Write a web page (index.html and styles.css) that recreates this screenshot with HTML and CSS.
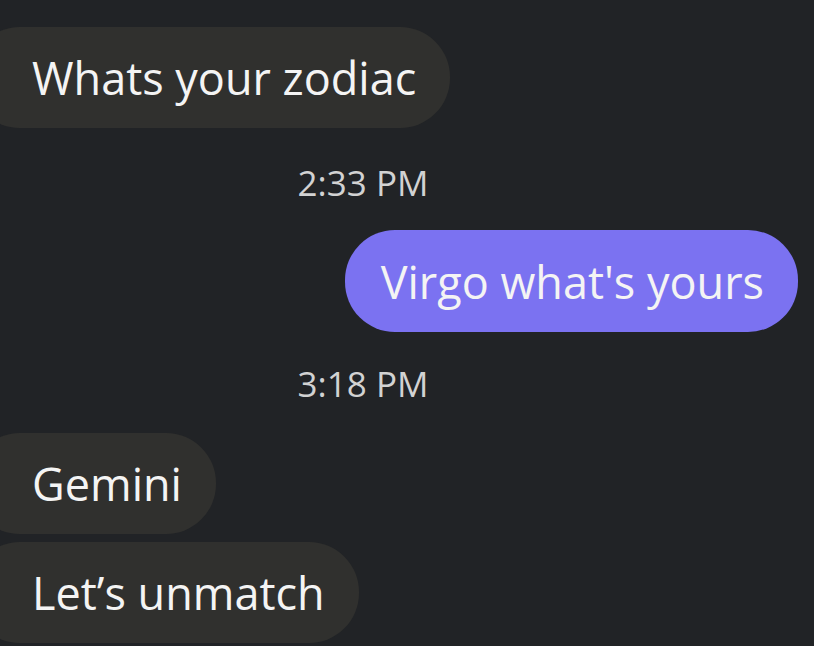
FILE: index.html
```html
<!DOCTYPE html>
<html>
<head>
<meta charset="utf-8">
<link rel="stylesheet" href="styles.css">
</head>
<body>
<div class="chat">
  <div class="row left first"><div class="bubble in">Whats your zodiac</div></div>
  <div class="time">2:33 PM</div>
  <div class="row right"><div class="bubble out">Virgo what's yours</div></div>
  <div class="time t2">3:18 PM</div>
  <div class="row left g"><div class="bubble in">Gemini</div></div>
  <div class="row left u"><div class="bubble in">Let’s unmatch</div></div>
</div>
</body>
</html>
```
FILE: styles.css
```css
html, body {
  margin: 0;
  padding: 0;
  background: #212326;
  height: 100%;
  overflow: hidden;
}
.chat {
  display: flex;
  flex-direction: column;
  font-family: "Open Sans", "Noto Sans", sans-serif;
  color: #f4f4f4;
}
.row {
  display: flex;
}
.row.left { justify-content: flex-start; }
.row.right { justify-content: flex-end; padding-right: 16px; }
.first { margin-top: 27px; }
.bubble {
  height: 101px;
  box-sizing: border-box;
  display: flex;
  align-items: center;
  font-size: 45px;
  border-radius: 50px;
  white-space: nowrap;
}
.in {
  background: #30302e;
  margin-left: -30px;
  padding: 0 34px 0 62px;
}
.out {
  background: #7b72f1;
  padding: 0 34px 0 36px;
  height: 102px;
}
.time {
  text-align: center;
  font-size: 35px;
  color: #d2d2d2;
  height: 102px;
  line-height: 110px;
  padding-right: 88px;
}
.time.t2 { height: 101px; line-height: 104px; }
.u { margin-top: 8px; }
```
